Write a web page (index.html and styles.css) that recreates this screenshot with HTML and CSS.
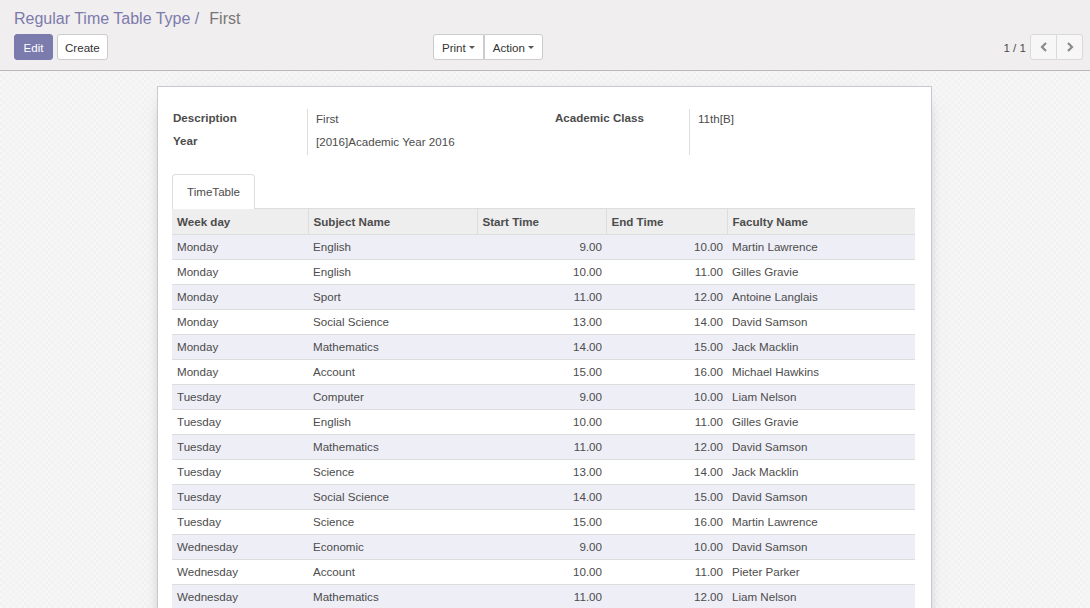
FILE: index.html
```html
<!DOCTYPE html>
<html>
<head>
<meta charset="utf-8">
<title>Regular Time Table Type</title>
<link rel="stylesheet" href="styles.css">
</head>
<body>
<div class="cp">
  <div class="breadcrumb"><span class="bc-link">Regular Time Table Type /</span><span class="bc-active">First</span></div>
  <div class="cp-row">
    <div class="cp-left">
      <div class="cp-buttons">
        <button class="btn btn-primary">Edit</button>
        <button class="btn">Create</button>
      </div>
      <div class="cp-sidebar">
        <button class="btn btn-g-left">Print <span class="caret"></span></button><button class="btn btn-g-right">Action <span class="caret"></span></button>
      </div>
    </div>
    <div class="cp-right">
      <span class="pager-value">1 / 1</span>
      <div class="pager-group">
        <button class="btn pager-btn btn-g-left"><svg width="10" height="12" viewBox="0 0 10 12"><path d="M7 2 L3 6 L7 10" fill="none" stroke="#8a8a8a" stroke-width="2.2"/></svg></button><button class="btn pager-btn btn-g-right"><svg width="10" height="12" viewBox="0 0 10 12"><path d="M3 2 L7 6 L3 10" fill="none" stroke="#8a8a8a" stroke-width="2.2"/></svg></button>
      </div>
    </div>
  </div>
</div>
<div class="content">
  <div class="sheet">
    <div class="group">
      <div class="g-label lbl-left">Description</div>
      <div class="g-value">First</div>
      <div class="g-label lbl-right">Academic Class</div>
      <div class="g-value">11th[B]</div>
      <div class="g-label lbl-left">Year</div>
      <div class="g-value">[2016]Academic Year 2016</div>
      <div class="g-label lbl-right"></div>
      <div class="g-value"></div>
    </div>
    <div class="tabs"><div class="tab">TimeTable</div></div>
    <table class="list">
      <colgroup><col class="c1"><col class="c2"><col class="c3"><col class="c4"><col class="c5"></colgroup>
      <thead>
        <tr><th>Week day</th><th>Subject Name</th><th>Start Time</th><th>End Time</th><th>Faculty Name</th></tr>
      </thead>
      <tbody>
        <tr><td>Monday</td><td>English</td><td class="num">9.00</td><td class="num">10.00</td><td>Martin Lawrence</td></tr>
        <tr><td>Monday</td><td>English</td><td class="num">10.00</td><td class="num">11.00</td><td>Gilles Gravie</td></tr>
        <tr><td>Monday</td><td>Sport</td><td class="num">11.00</td><td class="num">12.00</td><td>Antoine Langlais</td></tr>
        <tr><td>Monday</td><td>Social Science</td><td class="num">13.00</td><td class="num">14.00</td><td>David Samson</td></tr>
        <tr><td>Monday</td><td>Mathematics</td><td class="num">14.00</td><td class="num">15.00</td><td>Jack Macklin</td></tr>
        <tr><td>Monday</td><td>Account</td><td class="num">15.00</td><td class="num">16.00</td><td>Michael Hawkins</td></tr>
        <tr><td>Tuesday</td><td>Computer</td><td class="num">9.00</td><td class="num">10.00</td><td>Liam Nelson</td></tr>
        <tr><td>Tuesday</td><td>English</td><td class="num">10.00</td><td class="num">11.00</td><td>Gilles Gravie</td></tr>
        <tr><td>Tuesday</td><td>Mathematics</td><td class="num">11.00</td><td class="num">12.00</td><td>David Samson</td></tr>
        <tr><td>Tuesday</td><td>Science</td><td class="num">13.00</td><td class="num">14.00</td><td>Jack Macklin</td></tr>
        <tr><td>Tuesday</td><td>Social Science</td><td class="num">14.00</td><td class="num">15.00</td><td>David Samson</td></tr>
        <tr><td>Tuesday</td><td>Science</td><td class="num">15.00</td><td class="num">16.00</td><td>Martin Lawrence</td></tr>
        <tr><td>Wednesday</td><td>Economic</td><td class="num">9.00</td><td class="num">10.00</td><td>David Samson</td></tr>
        <tr><td>Wednesday</td><td>Account</td><td class="num">10.00</td><td class="num">11.00</td><td>Pieter Parker</td></tr>
        <tr><td>Wednesday</td><td>Mathematics</td><td class="num">11.00</td><td class="num">12.00</td><td>Liam Nelson</td></tr>
      </tbody>
    </table>
  </div>
</div>
</body>
</html>
```
FILE: styles.css
```css
html, body {
  margin: 0;
  padding: 0;
  height: 100%;
  overflow: hidden;
}
body {
  font-family: "Liberation Sans", Arial, sans-serif;
  font-size: 11.6px;
  color: #4c4c4c;
  background: #f7f7f7;
}
.cp {
  background: #f0eeee;
  border-bottom: 1px solid #b9b9b9;
  padding: 7px 7px 10px 14px;
}
.breadcrumb {
  font-size: 16px;
  line-height: 24px;
  height: 24px;
  margin-bottom: 3px;
  color: #7c7bad;
  white-space: nowrap;
}
.bc-link { color: #7c7bad; }
.bc-active { color: #777777; margin-left: 10px; }
.cp-row {
  display: flex;
  height: 26px;
}
.cp-left {
  width: 529px;
  display: flex;
  justify-content: space-between;
}
.cp-buttons {
  display: flex;
  gap: 4px;
}
.cp-sidebar {
  display: flex;
}
.cp-right {
  flex: 1;
  display: flex;
  justify-content: flex-end;
  align-items: center;
}
.btn {
  height: 26px;
  padding: 0 7px;
  font-family: "Liberation Sans", Arial, sans-serif;
  font-size: 11.6px;
  color: #333;
  background: #ffffff;
  border: 1px solid #cccccc;
  border-radius: 3px;
  display: inline-flex;
  align-items: center;
  cursor: pointer;
}
.btn-primary {
  background: #7c7bad;
  border-color: #7c7bad;
  color: #ffffff;
  padding: 0 8.5px;
}
.cp-sidebar .btn { padding: 0 8px; }
.btn-g-left {
  border-top-right-radius: 0;
  border-bottom-right-radius: 0;
}
.btn-g-right {
  border-top-left-radius: 0;
  border-bottom-left-radius: 0;
}
.caret {
  display: inline-block;
  width: 0;
  height: 0;
  margin-left: 3px;
  border-top: 3px solid #555;
  border-left: 3px solid transparent;
  border-right: 3px solid transparent;
}
.pager-value {
  margin-right: 4px;
  color: #4c4c4c;
}
.pager-group { display: flex; }
.pager-btn {
  width: 27px;
  padding: 0;
  justify-content: center;
  background: #f7f7f7;
  border-color: #dadada;
}
.pager-btn.btn-g-right { border-left: none; width: 26px; }
.content {
  height: calc(100% - 71px);
  background-color: #f6f6f6;
  background-image:
    linear-gradient(45deg, #f2f2f2 25%, transparent 25%, transparent 75%, #f2f2f2 75%),
    linear-gradient(45deg, #f2f2f2 25%, transparent 25%, transparent 75%, #f2f2f2 75%);
  background-size: 6px 6px;
  background-position: 0 0, 3px 3px;
  padding-top: 15px;
  box-sizing: border-box;
}
.sheet {
  width: 775px;
  box-sizing: border-box;
  margin: 0 0 0 calc(50% - 388px);
  background: #ffffff;
  border: 1px solid #c8c8d3;
  box-shadow: 0 5px 20px -15px #000;
  padding: 22px 16px 0 14px;
  min-height: 600px;
}
.group {
  display: grid;
  grid-template-columns: 136px 235px 147px 225px;
  grid-auto-rows: 23px;
}
.g-label {
  font-weight: bold;
  line-height: 18px;
  border-right: 1px solid #dddddd;
}
.lbl-left { padding-left: 1px; }
.lbl-right { padding-left: 12px; }
.g-value {
  line-height: 18px;
  padding-left: 8px;
  padding-top: 1px;
}
.tabs {
  margin-top: 19px;
  border-bottom: 1px solid #dddddd;
  display: flex;
  height: 34px;
}
.tab {
  height: 35px;
  box-sizing: border-box;
  padding: 0 14px 0 14px;
  line-height: 34px;
  background: #ffffff;
  border: 1px solid #dddddd;
  border-bottom: none;
  border-radius: 4px 4px 0 0;
  color: #4c4c4c;
}
.list {
  width: 743px;
  border-collapse: collapse;
  table-layout: fixed;
}
.c1 { width: 136px; }
.c2 { width: 169px; }
.c3 { width: 129px; }
.c4 { width: 121px; }
.c5 { width: 188px; }
.list th {
  background: #eeeeee;
  font-weight: bold;
  text-align: left;
  height: 25px;
  padding: 0 5px;
  box-sizing: border-box;
  border-left: 1px solid #dddddd;
}
.list th:first-child { border-left: none; }
.list td {
  height: 25px;
  padding: 0 4px 0 5px;
  box-sizing: border-box;
  border-top: 1px solid #dddddd;
  white-space: nowrap;
}
.list tbody tr:nth-child(odd) td { background: #eeeef6; }
.list td.num { text-align: right; }
```
